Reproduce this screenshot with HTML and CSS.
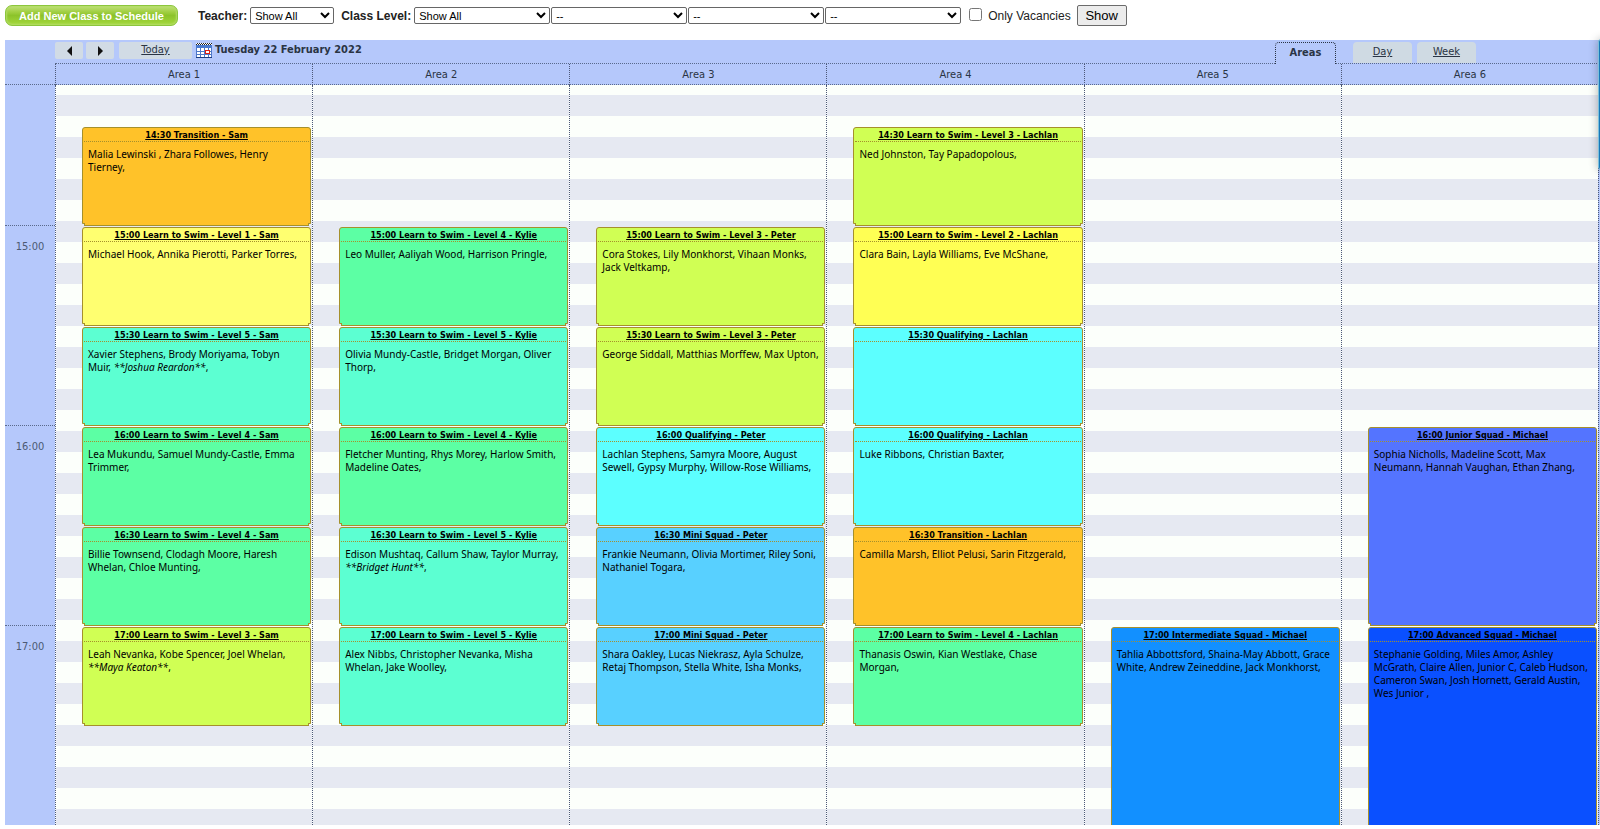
FILE: index.html
```
<!DOCTYPE html>
<html lang="en">
<head>
    <meta charset="UTF-8">
    <meta name="viewport" content="width=device-width, initial-scale=1.0">
    <title>Class Schedule</title>
    <link rel="stylesheet" href="styles.css">
</head>
<body>
    <form class="toolbar">
        <button type="button" class="add-btn">Add New Class to Schedule</button>
        <label for="teacher" class="filter-label">Teacher:</label>
        <select id="teacher" class="teacher-select"><option>Show All</option></select>
        <label for="level1" class="filter-label level-label">Class Level:</label>
        <div class="levels">
            <select id="level1"><option>Show All</option></select>
            <select aria-label="Class level 2"><option>--</option></select>
            <select aria-label="Class level 3"><option>--</option></select>
            <select aria-label="Class level 4"><option>--</option></select>
        </div>
        <input type="checkbox" id="vacancies">
        <label for="vacancies">Only Vacancies</label>
        <button type="submit" class="show-btn">Show</button>
    </form>

    <div class="calendar">
        <div class="navline">
            <button type="button" class="arrow" aria-label="Previous day"><svg width="5" height="10"><path d="M5 0v10L0 5z"/></svg></button>
            <button type="button" class="arrow" aria-label="Next day"><svg width="5" height="10"><path d="M0 0v10l5-5z"/></svg></button>
            <a href="#" class="today">Today</a>
            <button type="button" class="minical" aria-label="Pick a date">
                <svg width="16" height="15" shape-rendering="crispEdges">
                    <path fill="#fff" d="M0 0h16v15H0z"/>
                    <path fill="#222" d="M0 1h1v1H0zM2 1h1v1H2zM4 1h1v1H4zM6 1h1v1H6zM8 1h1v1H8zM10 1h1v1h-1zM12 1h1v1h-1zM14 1h1v1h-1zM1 0h1v1H1zM3 0h1v1H3zM5 0h1v1H5zM7 0h1v1H7zM9 0h1v1H9zM11 0h1v1h-1zM13 0h1v1h-1zM15 0h1v1h-1z"/>
                    <path fill="#4a7ad0" d="M0 2h16v3H0z"/>
                    <path fill="#4f78c8" d="M0 5h1v10H0zM4 5h1v10H4zM8 5h1v10H8zM12 5h1v10h-1zM15 5h1v10h-1zM0 8h16v1H0zM0 11h16v1H0z"/>
                    <path fill="#1c3c80" d="M0 14h16v1H0z"/>
                    <path fill="#e02010" d="M9 7h5v4H9z"/>
                    <path fill="#fff" d="M10 8h3v2h-3z"/>
                </svg>
            </button>
            <h1 class="date">Tuesday 22 February 2022</h1>
            <nav class="tabs">
                <a href="#" class="tab active">Areas</a>
                <a href="#" class="tab">Day</a>
                <a href="#" class="tab">Week</a>
            </nav>
        </div>

        <div class="row heads">
            <div class="corner"></div>
            <div class="head">Area 1</div>
            <div class="head">Area 2</div>
            <div class="head">Area 3</div>
            <div class="head">Area 4</div>
            <div class="head">Area 5</div>
            <div class="head">Area 6</div>
        </div>

        <div class="row day">
            <div class="hours">
                <div class="hour first"></div>
                <div class="hour">15:00</div>
                <div class="hour">16:00</div>
                <div class="hour">17:00</div>
            </div>

            <div class="area">
                <div class="event t1430 transition">
                    <a href="#" class="title">14:30 Transition - Sam</a>
                    <p>Malia Lewinski , Zhara Followes, Henry Tierney,</p>
                </div>
                <div class="event t1500 level1">
                    <a href="#" class="title">15:00 Learn to Swim - Level 1 - Sam</a>
                    <p>Michael Hook, Annika Pierotti, Parker Torres,</p>
                </div>
                <div class="event t1530 level5">
                    <a href="#" class="title">15:30 Learn to Swim - Level 5 - Sam</a>
                    <p>Xavier Stephens, Brody Moriyama, Tobyn Muir, <i>**Joshua Reardon**</i>,</p>
                </div>
                <div class="event t1600 level4">
                    <a href="#" class="title">16:00 Learn to Swim - Level 4 - Sam</a>
                    <p>Lea Mukundu, Samuel Mundy-Castle, Emma Trimmer,</p>
                </div>
                <div class="event t1630 level4">
                    <a href="#" class="title">16:30 Learn to Swim - Level 4 - Sam</a>
                    <p>Billie Townsend, Clodagh Moore, Haresh Whelan, Chloe Munting,</p>
                </div>
                <div class="event t1700 level3">
                    <a href="#" class="title">17:00 Learn to Swim - Level 3 - Sam</a>
                    <p>Leah Nevanka, Kobe Spencer, Joel Whelan, <i>**Maya Keaton**</i>,</p>
                </div>
            </div>

            <div class="area">
                <div class="event t1500 level4">
                    <a href="#" class="title">15:00 Learn to Swim - Level 4 - Kylie</a>
                    <p>Leo Muller, Aaliyah Wood, Harrison Pringle,</p>
                </div>
                <div class="event t1530 level5">
                    <a href="#" class="title">15:30 Learn to Swim - Level 5 - Kylie</a>
                    <p>Olivia Mundy-Castle, Bridget Morgan, Oliver Thorp,</p>
                </div>
                <div class="event t1600 level4">
                    <a href="#" class="title">16:00 Learn to Swim - Level 4 - Kylie</a>
                    <p>Fletcher Munting, Rhys Morey, Harlow Smith, Madeline Oates,</p>
                </div>
                <div class="event t1630 level5">
                    <a href="#" class="title">16:30 Learn to Swim - Level 5 - Kylie</a>
                    <p>Edison Mushtaq, Callum Shaw, Taylor Murray, <i>**Bridget Hunt**</i>,</p>
                </div>
                <div class="event t1700 level5">
                    <a href="#" class="title">17:00 Learn to Swim - Level 5 - Kylie</a>
                    <p>Alex Nibbs, Christopher Nevanka, Misha Whelan, Jake Woolley,</p>
                </div>
            </div>

            <div class="area">
                <div class="event t1500 level3">
                    <a href="#" class="title">15:00 Learn to Swim - Level 3 - Peter</a>
                    <p>Cora Stokes, Lily Monkhorst, Vihaan Monks, Jack Veltkamp,</p>
                </div>
                <div class="event t1530 level3">
                    <a href="#" class="title">15:30 Learn to Swim - Level 3 - Peter</a>
                    <p>George Siddall, Matthias Morffew, Max Upton,</p>
                </div>
                <div class="event t1600 qualifying">
                    <a href="#" class="title">16:00 Qualifying - Peter</a>
                    <p>Lachlan Stephens, Samyra Moore, August Sewell, Gypsy Murphy, Willow-Rose Williams,</p>
                </div>
                <div class="event t1630 mini">
                    <a href="#" class="title">16:30 Mini Squad - Peter</a>
                    <p>Frankie Neumann, Olivia Mortimer, Riley Soni, Nathaniel Togara,</p>
                </div>
                <div class="event t1700 mini">
                    <a href="#" class="title">17:00 Mini Squad - Peter</a>
                    <p>Shara Oakley, Lucas Niekrasz, Ayla Schulze, Retaj Thompson, Stella White, Isha Monks,</p>
                </div>
            </div>

            <div class="area">
                <div class="event t1430 level3">
                    <a href="#" class="title">14:30 Learn to Swim - Level 3 - Lachlan</a>
                    <p>Ned Johnston, Tay Papadopolous,</p>
                </div>
                <div class="event t1500 level2">
                    <a href="#" class="title">15:00 Learn to Swim - Level 2 - Lachlan</a>
                    <p>Clara Bain, Layla Williams, Eve McShane,</p>
                </div>
                <div class="event t1530 qualifying">
                    <a href="#" class="title">15:30 Qualifying - Lachlan</a>
                </div>
                <div class="event t1600 qualifying">
                    <a href="#" class="title">16:00 Qualifying - Lachlan</a>
                    <p>Luke Ribbons, Christian Baxter,</p>
                </div>
                <div class="event t1630 transition">
                    <a href="#" class="title">16:30 Transition - Lachlan</a>
                    <p>Camilla Marsh, Elliot Pelusi, Sarin Fitzgerald,</p>
                </div>
                <div class="event t1700 level4">
                    <a href="#" class="title">17:00 Learn to Swim - Level 4 - Lachlan</a>
                    <p>Thanasis Oswin, Kian Westlake, Chase Morgan,</p>
                </div>
            </div>

            <div class="area">
                <div class="event t1700 slots-3 intermediate">
                    <a href="#" class="title">17:00 Intermediate Squad - Michael</a>
                    <p>Tahlia Abbottsford, Shaina-May Abbott, Grace White, Andrew Zeineddine, Jack Monkhorst,</p>
                </div>
            </div>

            <div class="area">
                <div class="event t1600 slots-2 junior">
                    <a href="#" class="title">16:00 Junior Squad - Michael</a>
                    <p>Sophia Nicholls, Madeline Scott, Max Neumann, Hannah Vaughan, Ethan Zhang,</p>
                </div>
                <div class="event t1700 slots-3 advanced">
                    <a href="#" class="title">17:00 Advanced Squad - Michael</a>
                    <p>Stephanie Golding, Miles Amor, Ashley McGrath, Claire Allen, Junior C, Caleb Hudson, Cameron Swan, Josh Hornett, Gerald Austin, Wes Junior ,</p>
                </div>
            </div>
        </div>
    </div>

    <div class="side-panel"></div>
</body>
</html>
```
FILE: styles.css
```
* {
    box-sizing: border-box;
}
body {
    margin: 0;
    height: 100vh;
    display: flex;
    flex-direction: column;
    overflow: hidden;
    background-color: white;
    color: #222;
    font-family: "Liberation Sans", Arial, sans-serif;
    font-size: 12px;
}

/* filters */
.toolbar {
    display: flex;
    align-items: center;
    height: 31px;
    margin-bottom: 9px;
    padding-left: 5px;
    flex-shrink: 0;
}
.add-btn {
    width: 173px;
    height: 21px;
    margin-right: 20px;
    padding: 0;
    border: 1px solid #8cc63c;
    border-radius: 7px;
    background: linear-gradient(#c0e07c 0%, #a2d044 30%, #8cc32a 50%, #a4d83c 100%);
    box-shadow: inset 0 0 2px 1px #b4dc68;
    color: white;
    font-family: inherit;
    font-size: 11px;
    font-weight: bold;
}
.filter-label {
    font-weight: bold;
    margin-right: 3px;
}
.level-label {
    margin-left: 7px;
}
select {
    appearance: none;
    width: 136px;
    height: 17px;
    padding: 0 4px;
    border: 1px solid #666;
    border-radius: 2px;
    background: white url("data:image/svg+xml,%3Csvg xmlns='http://www.w3.org/2000/svg' width='10' height='7'%3E%3Cpath d='M1 1l4 4 4-4' fill='none' stroke='black' stroke-width='2'/%3E%3C/svg%3E") no-repeat right 3px center;
    color: black;
    font-family: inherit;
    font-size: 11px;
}
.teacher-select {
    width: 84px;
}
.levels {
    display: flex;
    gap: 1px;
}
#vacancies {
    width: 13px;
    height: 13px;
    margin: 0 6px 3px 8px;
}
.show-btn {
    height: 21px;
    width: 50px;
    margin-left: 6px;
    padding: 0;
    border: 1px solid #6b6b6b;
    border-radius: 2px;
    background-color: #ececec;
    color: black;
    font-family: inherit;
    font-size: 13px;
}

/* calendar */
.calendar {
    flex: 1;
    min-height: 0;
    display: flex;
    flex-direction: column;
    margin: 0 0 4px 5px;
    padding-right: 1px;
    background-color: #b5c8fb;
    color: #2a3444;
    font-family: "DejaVu Sans Condensed", Tahoma, sans-serif;
    font-size: 11px;
}
.navline {
    display: flex;
    height: 24px;
    margin-left: 50px;
    padding-top: 2px;
    border-bottom: 1px dotted #5a6a8c;
    flex-shrink: 0;
}
.arrow,
.today {
    height: 17px;
    border: 0;
    border-radius: 2px;
    background-color: #d1dbe5;
}
.arrow {
    width: 28px;
    margin-right: 3px;
    padding: 0;
}
.arrow svg {
    display: block;
    margin: auto;
    fill: #111;
}
.today {
    width: 73px;
    margin-left: 2px;
    color: inherit;
    line-height: 16px;
    text-align: center;
}
.minical {
    height: 16px;
    margin-left: 4px;
    padding: 0;
    border: 0;
    background: none;
}
.minical svg {
    display: block;
}
.date {
    margin: 0 0 0 3px;
    font-size: 11px;
    line-height: 16px;
}
.tabs {
    display: flex;
    gap: 5px;
    margin-left: auto;
    padding-right: 123px;
}
.tab {
    width: 59px;
    height: 21px;
    border-radius: 4px 4px 0 0;
    background-color: #cfdae3;
    color: inherit;
    line-height: 19px;
    text-align: center;
}
.tab.active {
    width: 61px;
    height: 22px;
    margin-right: 12px;
    border: 1px dotted #2a3444;
    border-bottom: 0;
    background-color: #b5c8fb;
    font-weight: bold;
    text-decoration: none;
}
.row {
    display: grid;
    grid-template-columns: 50px repeat(6, minmax(0, 1fr));
}
.heads {
    height: 21px;
    border-right: 1px solid transparent;
    border-bottom: 1px dotted #5a6a8c;
    line-height: 21px;
    text-align: center;
    flex-shrink: 0;
}
.head,
.area {
    border-left: 1px dotted #4c5878;
}
.day {
    flex: 1;
    min-height: 0;
    overflow: hidden;
    border-right: 1px dotted #4c5878;
}
.hour {
    height: 200px;
    padding-top: 14px;
    border-top: 1px dotted #5a6a8c;
    color: #4c5a74;
    line-height: 14px;
    text-align: center;
}
.hour.first {
    height: 140px;
    border-top: 0;
}
.area {
    display: grid;
    grid-template-rows: repeat(8, 100px);
    align-content: start;
    padding: 42px 1px 0 26px;
    background: #fcfffb repeating-linear-gradient(#e6e9f2 0 21px, #fcfffb 21px 42px) 0 10px no-repeat;
}

/* classes */
.event {
    position: relative;
    height: 97px;
    border: 1px solid #a5902c;
    border-radius: 3px 3px 0 0;
    color: black;
    font-family: "Noto Sans", Tahoma, sans-serif;
    font-size: 10px;
    line-height: 13px;
}
/* second edge under the card */
.event::after {
    content: "";
    position: absolute;
    left: 1px;
    right: 1px;
    bottom: -3px;
    height: 2px;
    border: 1px solid #a5902c;
    border-top: 0;
    background-color: inherit;
}
.event .title {
    display: block;
    height: 14px;
    margin: 0 1px;
    border-bottom: 1px dotted #a5902c;
    color: black;
    font-family: "DejaVu Sans Condensed", Tahoma, sans-serif;
    font-size: 9px;
    font-weight: bold;
    line-height: 14px;
    text-align: center;
}
.event p {
    margin: 0;
    padding: 6px 5px;
}
.slots-2 {
    grid-row-end: span 2;
    height: 197px;
}
.slots-3 {
    grid-row-end: span 3;
    height: 297px;
}
.t1430 { grid-row-start: 1; }
.t1500 { grid-row-start: 2; }
.t1530 { grid-row-start: 3; }
.t1600 { grid-row-start: 4; }
.t1630 { grid-row-start: 5; }
.t1700 { grid-row-start: 6; }

.transition { background-color: #ffc229; }
.level1 { background-color: #ffff70; }
.level2 { background-color: #ffff54; }
.level3 { background-color: #d0ff54; }
.level4 { background-color: #5cffa4; }
.level5 { background-color: #5cffd2; }
.qualifying { background-color: #5cffff; }
.mini { background-color: #58d0ff; }
.intermediate { background-color: #1290ff; }
.junior { background-color: #5474ff; }
.advanced { background-color: #0a50ff; }

/* drawer peeking in at the window edge */
.side-panel {
    position: absolute;
    top: 39px;
    right: -20px;
    width: 22px;
    height: 131px;
    border: 1px solid #7cc0dc;
    border-radius: 3px;
    background-color: #1878b8;
    box-shadow: 0 0 10px rgba(0, 0, 0, 0.3);
}
```
